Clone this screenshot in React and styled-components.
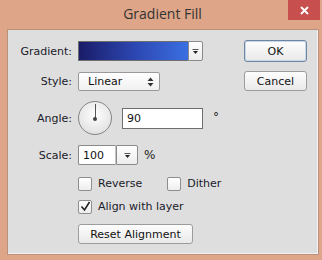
import React from 'react';
import styled, { createGlobalStyle } from 'styled-components';

const Global = createGlobalStyle`
    * {
        margin: 0;
        padding: 0;
        box-sizing: border-box;
    }

    body {
        background: #dea588;
        font-family: "DejaVu Sans", "Liberation Sans", sans-serif;
    }
`;

const Window = styled.div`
    width: 322px;
    height: 260px;
    background: #dea588;
    display: flex;
    flex-direction: column;
`;

const TitleBar = styled.div`
    height: 29px;
    display: grid;
    grid-template-columns: 1fr auto 1fr;
    align-items: start;
`;

const Title = styled.div`
    grid-column: 2;
    padding-top: 4px;
    font-family: "Open Sans", "Liberation Sans", sans-serif;
    font-size: 14px;
    color: #333;
    margin-left: 3px;
`;

const Close = styled.div`
    grid-column: 3;
    justify-self: end;
    width: 32px;
    height: 20px;
    margin-right: 2px;
    background: #c7504f;
    display: flex;
    align-items: center;
    justify-content: center;
`;

const Panel = styled.div`
    margin: 0 3px 5px 7px;
    height: 226px;
    background: #dedede;
    border: 1px solid #b9917d;
    box-shadow: inset -1px -1px 0 #f2f2f2;
    display: grid;
    grid-template-columns: 1fr 63px;
    padding-right: 11px;
`;

const Form = styled.div`
    display: flex;
    flex-direction: column;
    padding-top: 11px;
`;

const Row = styled.div`
    display: grid;
    grid-template-columns: 64px auto;
    column-gap: 6px;
    align-items: center;
    justify-content: start;
    margin-top: ${p => p.$top || 0}px;
    height: ${p => p.$h || 20}px;
`;

const Label = styled.div`
    text-align: right;
    font-size: 11px;
    color: #1a1a2a;
`;

const Controls = styled.div`
    display: flex;
    align-items: center;
    gap: ${p => p.$gap || 0}px;
    grid-column: 2;
`;

const Swatch = styled.div`
    width: 110px;
    height: 20px;
    border: 1px solid #6e6e6e;
    border-right: none;
    background: linear-gradient(to right, #1a1c68, #2c46b0 50%, #3a6fe2);
`;

const ArrowBox = styled.div`
    width: ${p => p.$w || 15}px;
    height: 20px;
    border: 1px solid #8a8a8a;
    border-radius: 0 2px 2px 0;
    background: linear-gradient(#ffffff, #ececec);
    display: flex;
    align-items: center;
    justify-content: center;
`;

const Select = styled.div`
    width: 82px;
    height: 19px;
    margin-top: 1px;
    border: 1px solid #9a9a9a;
    border-radius: 2px;
    background: linear-gradient(#ffffff, #f0f0f0);
    display: flex;
    align-items: center;
    justify-content: space-between;
    padding: 0 5px 0 9px;
    font-size: 11px;
    color: #111;
`;

const Dial = styled.div`
    width: 34px;
    height: 34px;
    border-radius: 50%;
    border: 1px solid #858585;
    background: radial-gradient(circle at 50% 40%, #ffffff, #e8e8e8 60%, #d4d4d4);
    position: relative;
`;

const Hand = styled.div`
    position: absolute;
    left: 15.5px;
    top: 2px;
    width: 1px;
    height: 15px;
    background: #555;

    &::after {
        content: "";
        position: absolute;
        left: -1.5px;
        bottom: -2px;
        width: 4px;
        height: 4px;
        border-radius: 50%;
        background: #444;
    }
`;

const Input = styled.div`
    width: 81px;
    height: 21px;
    border: 1px solid #6e6e6e;
    background: #fff;
    font-size: 11px;
    color: #111;
    display: flex;
    align-items: center;
    padding-left: 4px;
`;

const Unit = styled.span`
    font-size: 12px;
    color: #222;
    margin-top: ${p => p.$up ? -3 : 0}px;
`;

const Combo = styled.div`
    display: flex;
    height: 20px;
`;

const ComboText = styled.div`
    width: 38px;
    height: 20px;
    border: 1px solid #8a8a8a;
    border-right: 1px solid #c4c4c4;
    border-radius: 2px 0 0 2px;
    background: #fff;
    font-size: 11px;
    color: #111;
    display: flex;
    align-items: center;
    padding-left: 4px;
`;

const Check = styled.label`
    display: flex;
    align-items: center;
    gap: 6px;
    font-size: 11px;
    color: #1a1a2a;
`;

const Box = styled.span`
    width: 14px;
    height: 14px;
    border: 1px solid #8e8e8e;
    border-radius: 2px;
    background: linear-gradient(#ffffff, #ededed);
    display: flex;
    align-items: center;
    justify-content: center;
`;

const Button = styled.div`
    width: ${p => p.$w || 63}px;
    height: ${p => p.$h || 20}px;
    margin-top: ${p => p.$top || 0}px;
    border: 1px solid ${p => p.$primary ? '#6f86a3' : '#9c9c9c'};
    box-shadow: ${p => p.$primary ? 'inset 0 0 0 1px #c9d6e6' : 'none'};
    border-radius: 3px;
    background: linear-gradient(#fdfdfd, #e9e9e9);
    display: flex;
    align-items: center;
    justify-content: center;
    font-size: 11px;
    color: #111;
`;

const Side = styled.div`
    display: flex;
    flex-direction: column;
    padding-top: 10px;
`;

const Down = () => (
    <svg width="7" height="5" viewBox="0 0 7 5">
        <path d="M0.5 0.5h6" stroke="#555" strokeWidth="1" />
        <path d="M1 2h5l-2.5 3z" fill="#222" />
    </svg>
);

const UpDown = () => (
    <svg width="7" height="10" viewBox="0 0 7 10">
        <path d="M3.5 0.5L6.5 4H0.5z" fill="#333" />
        <path d="M3.5 9.5L6.5 6H0.5z" fill="#333" />
    </svg>
);

const Tick = () => (
    <svg width="11" height="11" viewBox="0 0 11 11">
        <path d="M1.5 5.5l3 3.5 5-8" fill="none" stroke="#222" strokeWidth="1.6" />
    </svg>
);

const CloseIcon = () => (
    <svg width="9" height="9" viewBox="0 0 9 9">
        <path d="M1 1l7 7M8 1l-7 7" stroke="#fff" strokeWidth="1.8" />
    </svg>
);

const App = () => {
    return (
        <Window>
            <Global />
            <TitleBar>
                <Title>Gradient Fill</Title>
                <Close><CloseIcon /></Close>
            </TitleBar>
            <Panel>
                <Form>
                    <Row>
                        <Label>Gradient:</Label>
                        <Controls>
                            <Swatch />
                            <ArrowBox><Down /></ArrowBox>
                        </Controls>
                    </Row>
                    <Row $top={10}>
                        <Label>Style:</Label>
                        <Controls>
                            <Select>Linear <UpDown /></Select>
                        </Controls>
                    </Row>
                    <Row $top={10} $h={34}>
                        <Label>Angle:</Label>
                        <Controls $gap={10}>
                            <Dial><Hand /></Dial>
                            <Input>90</Input>
                            <Unit $up>°</Unit>
                        </Controls>
                    </Row>
                    <Row $top={10}>
                        <Label>Scale:</Label>
                        <Controls $gap={6}>
                            <Combo>
                                <ComboText>100</ComboText>
                                <ArrowBox $w={22}><Down /></ArrowBox>
                            </Combo>
                            <Unit>%</Unit>
                        </Controls>
                    </Row>
                    <Row $top={11} $h={15}>
                        <Controls $gap={25}>
                            <Check><Box />Reverse</Check>
                            <Check><Box />Dither</Check>
                        </Controls>
                    </Row>
                    <Row $top={8} $h={15}>
                        <Controls>
                            <Check><Box><Tick /></Box>Align with layer</Check>
                        </Controls>
                    </Row>
                    <Row $top={10}>
                        <Controls>
                            <Button $w={115} $h={20}>Reset Alignment</Button>
                        </Controls>
                    </Row>
                </Form>
                <Side>
                    <Button $primary $h={22}>OK</Button>
                    <Button $top={9}>Cancel</Button>
                </Side>
            </Panel>
        </Window>
    );
};

export default App;
